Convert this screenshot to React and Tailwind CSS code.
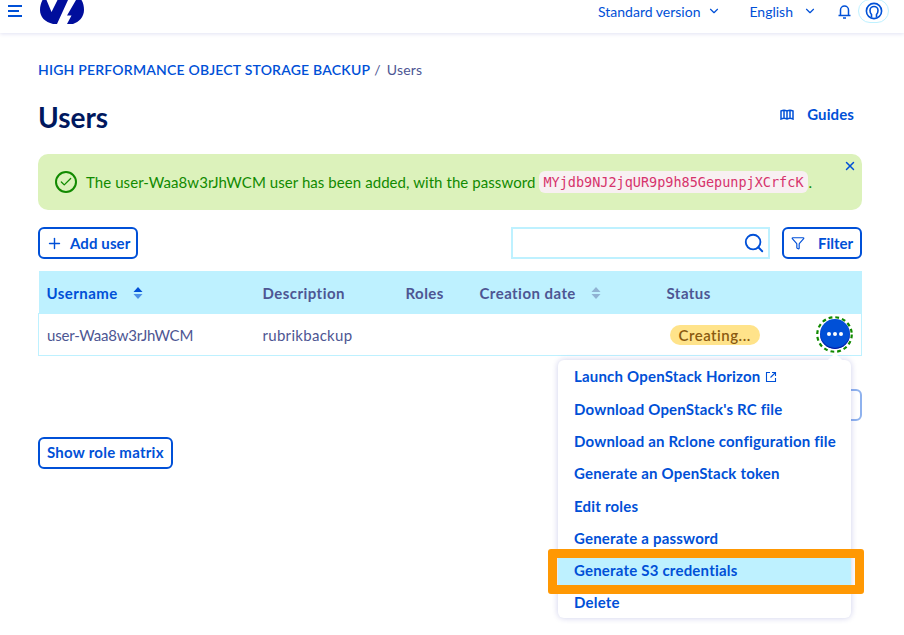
import { ChevronDown, Plus, Search, Funnel, X, Check } from "lucide-react";

const menuItems = [
  "Launch OpenStack Horizon",
  "Download OpenStack's RC file",
  "Download an Rclone configuration file",
  "Generate an OpenStack token",
  "Edit roles",
  "Generate a password",
  "Generate S3 credentials",
  "Delete",
];

function SortIcon({ muted }) {
  return (
    <svg width="10" height="14" viewBox="0 0 10 14" className={muted ? "text-[#4d5693] opacity-40" : "text-[#0050d7]"}>
      <path d="M5 1 9.500 6H.5z" fill="currentColor" />
      <path d="M5 13 .5 8h9z" fill="currentColor" opacity={muted ? 1 : 0.6} />
    </svg>
  );
}

function Header() {
  return (
    <header className="flex h-[33px] items-start justify-between bg-white pl-2 pr-[15px] shadow-[0_1px_4px_rgba(0,14,156,0.12)]">
      <div className="flex h-full items-start">
        <svg width="14" height="12" viewBox="0 0 14 12" className="mt-[5px] text-[#0050d7]">
          <path d="M0 1h14M0 6h11M0 11h14" stroke="currentColor" strokeWidth="2" fill="none" />
        </svg>
        <svg width="44" height="24" viewBox="0 0 44 24" className="ml-[18px]">
          <path d="M2.500 0H6.500L11.500 12 17.500 0H28L17 24H13C5 22 0 17 0 10 0 6 1 3 2.500 0z" fill="#000e9c" />
          <path d="M36 0h5.500C43.300 3 44 6 44 10c0 7-5 12-11 14h-6l4.500-8.500H27z" fill="#000e9c" />
        </svg>
      </div>
      <div className="flex h-[22px] items-center text-[#0050d7]">
        <span className="text-[14px]">Standard version</span>
        <ChevronDown size={14} className="ml-[7px]" />
        <span className="ml-[28px] text-[14px]">English</span>
        <ChevronDown size={14} className="ml-[10px]" />
        <svg width="13" height="15" viewBox="0 0 13 15" fill="none" stroke="currentColor" strokeWidth="1.500" className="ml-[21px]">
          <path d="M2.500 11V6a4 4 0 0 1 8 0v5M.5 11.500h12M5 14h3" />
        </svg>
        <span className="ml-[7px] flex h-[24px] w-[31px] items-center justify-center rounded-full border border-[#bef1ff]">
          <svg width="18" height="18" viewBox="0 0 18 18" fill="none" stroke="currentColor" strokeWidth="1.600">
            <circle cx="9" cy="9" r="7.600" />
            <path d="M6.500 15.500v-3C5.500 11.500 5 10 5 8.500a4 4 0 0 1 8 0c0 1.500-.5 3-1.500 4v3" />
          </svg>
        </span>
      </div>
    </header>
  );
}

function ActionButton() {
  return (
    <span className="relative -my-[3px] flex h-[37px] w-[37px] items-center justify-center">
      <svg width="37" height="37" viewBox="0 0 37 37" className="absolute inset-0">
        <circle cx="18.500" cy="18.500" r="17.250" fill="none" stroke="#118a00" strokeWidth="2.200" strokeDasharray="3.800 3" />
      </svg>
      <span className="flex h-[30px] w-[30px] items-center justify-center gap-[2px] rounded-full bg-[#0050d7] shadow-[inset_0_-1px_1px_#000e9c]">
        <i className="h-[4px] w-[4px] rounded-full bg-white" />
        <i className="h-[4px] w-[4px] rounded-full bg-white" />
        <i className="h-[4px] w-[4px] rounded-full bg-white" />
      </span>
    </span>
  );
}

export default function App() {
  return (
    <div className="relative h-[635px] w-[904px] overflow-hidden bg-white font-['Lato','Noto_Sans',sans-serif] text-[#4d5693]">
      <Header />
      <main className="pl-[38px] pr-[42px]">
        <nav className="mt-[26px] flex h-[20px] items-center text-[14px] tracking-[0.2px]">
          <span className="font-semibold text-[#0050d7]">HIGH PERFORMANCE OBJECT STORAGE BACKUP</span>
          <span className="ml-[4px]">/</span>
          <span className="ml-[6px]">Users</span>
        </nav>
        <div className="mt-[18px] flex h-[36px] items-center justify-between">
          <h1 className="mt-[4px] text-[28px] font-bold text-[#00185e]">Users</h1>
          <span className="mb-[2px] mr-[8px] flex items-center text-[15px] font-bold tracking-[0.1px] text-[#0050d7]">
            <svg width="14" height="12" viewBox="0 0 14 12" fill="none" stroke="currentColor" strokeWidth="1.500" className="mr-[13px]">
              <path d="M1 3c2-1 4-1 6 0 2-1 4-1 6 0v8c-2-1-4-1-6 0-2-1-4-1-6 0zM4 2v8M7 3v8M10 2v8" />
            </svg>
            Guides
          </span>
        </div>

        <div className="relative mt-[21px] flex h-[56px] items-center rounded-[10px] bg-[#dcf2bb] pl-[17px] text-[#118a00]">
          <span className="flex h-[22px] w-[22px] items-center justify-center rounded-full border-2 border-[#118a00]">
            <Check size={14} strokeWidth={2.200} />
          </span>
          <span className="ml-[9px] text-[15px] tracking-[0.07px]">The user-Waa8w3rJhWCM user has been added, with the password</span>
          <code className="ml-[4px] rounded-[6px] bg-[#f8f0f2] px-[4px] py-[1px] font-['DejaVu_Sans_Mono',monospace] text-[13.500px] text-[#d6336c]">
            MYjdb9NJ2jqUR9p9h85GepunpjXCrfcK
          </code>
          <span className="ml-[1px] text-[15px]">.</span>
          <X size={14} strokeWidth={2.500} className="absolute right-[5px] top-[5px] text-[#0050d7]" />
        </div>

        <div className="mt-[17px] flex items-center justify-between">
          <button className="flex h-[32px] items-center rounded-[6px] border-2 border-[#0050d7] pl-[6px] pr-[6px] text-[15px] font-bold tracking-[0.1px] text-[#0050d7]">
            <Plus size={17} className="mr-[7px]" />
            Add user
          </button>
          <div className="flex items-center">
            <div className="flex h-[32px] w-[259px] items-center justify-end border-2 border-[#bef1ff] pr-[3px] text-[#0050d7]">
              <Search size={22} strokeWidth={2} />
            </div>
            <button className="ml-[12px] flex h-[32px] w-[80px] items-center rounded-[6px] border-2 border-[#0050d7] pl-[7px] text-[15px] font-bold text-[#0050d7]">
              <Funnel size={14} className="mr-[13px]" />
              Filter
            </button>
          </div>
        </div>

        <table className="mt-[12px] w-[824px] table-fixed border-collapse text-left text-[15px]">
          <thead>
            <tr className="h-[42px] bg-[#bef1ff] tracking-[0.45px]">
              <th className="w-[216px] pl-[8px] pt-[2px] font-bold text-[#0050d7]">
                <span className="flex items-center">Username<span className="ml-[15px]"><SortIcon /></span></span>
              </th>
              <th className="w-[143px] pl-[8px] pt-[2px] font-bold">Description</th>
              <th className="w-[73px] pl-[8px] pt-[2px] font-bold">Roles</th>
              <th className="w-[187px] pl-[9px] pt-[2px] font-bold">
                <span className="flex items-center">Creation date<span className="ml-[15px]"><SortIcon muted /></span></span>
              </th>
              <th className="pl-[9px] pt-[2px] font-bold">Status</th>
            </tr>
          </thead>
          <tbody>
            <tr className="h-[42px] border border-[#bef1ff]">
              <td className="pl-[8px] pt-[2px] tracking-[-0.2px]">user-Waa8w3rJhWCM</td>
              <td className="pl-[8px] pt-[2px] tracking-[0.3px]">rubrikbackup</td>
              <td></td>
              <td></td>
              <td className="pl-[12px]">
                <div className="flex items-center justify-between pr-[8px]">
                  <span className="mt-[2px] rounded-full bg-[#ffe38a] px-[9px] text-[15px] font-semibold leading-[20px] tracking-[0.5px] text-[#8a5a10]">Creating...</span>
                  <ActionButton />
                </div>
              </td>
            </tr>
          </tbody>
        </table>

        <div className="mt-[33px] flex justify-end">
          <div className="h-[32px] w-[40px] rounded-[6px] border-2 border-[#8fb2ee]" />
        </div>

        <button className="mt-[16px] block h-[32px] rounded-[6px] border-2 border-[#0050d7] px-[7px] text-[15px] font-bold tracking-[0.25px] text-[#0050d7]">
          Show role matrix
        </button>
      </main>

      <div className="absolute left-[558px] top-[360px] w-[293px] rounded-[6px] bg-white shadow-[0_0_6px_rgba(0,14,156,0.2)]">
        <span className="absolute left-[272px] top-[-5px] h-[10px] w-[10px] rotate-45 bg-white" />
        {menuItems.map((item, index) => (
          <div
            key={item}
            className={`relative flex h-[32.300px] items-center pl-[16px] pt-[1px] text-[15px] font-bold tracking-[0.2px] text-[#0050d7] ${index === 6 ? "bg-[#bef1ff]" : ""}`}
          >
            {item}
            {index === 0 && (
              <svg width="12" height="12" viewBox="0 0 12 12" fill="none" stroke="currentColor" strokeWidth="1.100" className="ml-[4px]">
                <path d="M5 1.500H1.500v9h9V7M7 1.500h3.500V5M10.500 1.500 5.500 6.500" />
              </svg>
            )}
          </div>
        ))}
      </div>
      <div className="absolute left-[548px] top-[549px] h-[45px] w-[316px] rounded-[3px] border-[9px] border-[#ff9803]" />
    </div>
  );
}
